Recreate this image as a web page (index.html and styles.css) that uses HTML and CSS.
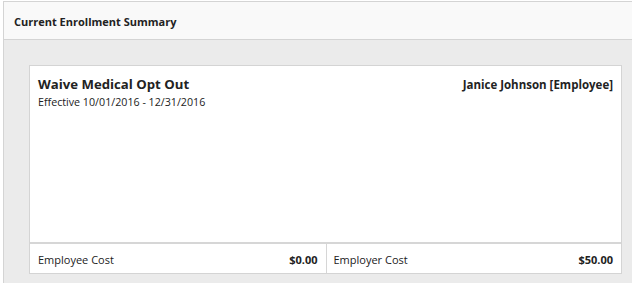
FILE: index.html
```html
<!DOCTYPE html>
<html>
<head>
<meta charset="utf-8">
<link rel="stylesheet" href="styles.css">
</head>
<body>
<div class="panel">
  <div class="panel-header">Current Enrollment Summary</div>
  <div class="panel-body">
    <div class="card">
      <div class="card-main">
        <div class="card-top">
          <div class="plan">
            <div class="plan-name">Waive Medical Opt Out</div>
            <div class="plan-dates">Effective 10/01/2016 - 12/31/2016</div>
          </div>
          <div class="member">Janice Johnson [Employee]</div>
        </div>
      </div>
      <div class="card-footer">
        <div class="cost-cell"><span class="cost-label">Employee Cost</span><span class="cost-value">$0.00</span></div>
        <div class="cost-cell"><span class="cost-label">Employer Cost</span><span class="cost-value">$50.00</span></div>
      </div>
    </div>
  </div>
</div>
</body>
</html>
```

FILE: styles.css
```css
html, body {
  margin: 0;
  padding: 0;
  background: #ffffff;
  overflow: hidden;
}
body {
  font-family: "Open Sans", "DejaVu Sans", sans-serif;
  color: #333333;
}
.panel {
  margin: 1px 0 0 3px;
  width: 645px;
  border: 1px solid #d4d4d4;
}
.panel-header {
  height: 38px;
  box-sizing: border-box;
  padding: 1px 10px 0;
  display: flex;
  align-items: center;
  background: #f9f9f9;
  border-bottom: 1px solid #d4d4d4;
  font-size: 11px;
  font-weight: 700;
  color: #222;
}
.panel-body {
  background: #ebebeb;
  padding: 25px;
}
.card {
  width: 593px;
  box-sizing: border-box;
  background: #fff;
  border: 1px solid #d4d4d4;
}
.card-main {
  height: 176px;
  box-sizing: border-box;
  padding: 9px 8px 8px;
}
.card-top {
  display: flex;
  justify-content: space-between;
  align-items: flex-start;
}
.plan-name {
  font-size: 13.2px;
  font-weight: 700;
  line-height: 19px;
  color: #222;
}
.plan-dates {
  font-size: 10.7px;
  line-height: 17px;
  color: #222;
}
.member {
  font-size: 11.5px;
  font-weight: 700;
  line-height: 19px;
  color: #222;
}
.card-footer {
  display: grid;
  grid-template-columns: 1fr 1fr;
  border-top: 2px solid #d6d6d6;
}
.cost-cell {
  height: 29px;
  padding: 1px 8px 0;
  box-sizing: border-box;
  display: flex;
  align-items: center;
  justify-content: space-between;
  font-size: 11px;
  color: #222;
}
.cost-cell + .cost-cell {
  border-left: 1px solid #d6d6d6;
  padding-left: 7px;
}
.cost-value {
  font-weight: 700;
}
```
